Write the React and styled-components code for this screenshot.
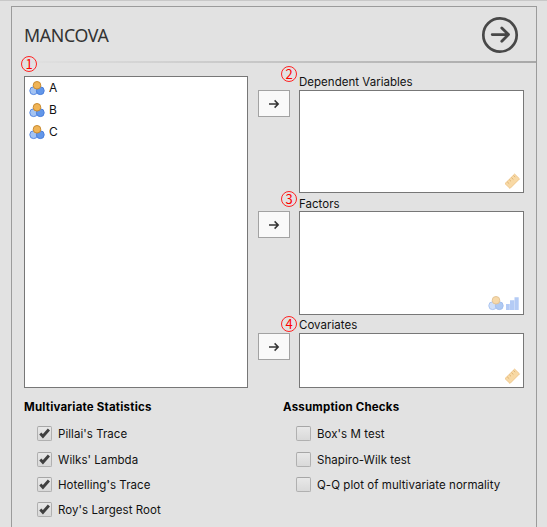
import React from "react";
import styled, { createGlobalStyle } from "styled-components";

const Global = createGlobalStyle`
  * { box-sizing: border-box; }
  html, body { margin: 0; height: 527px; overflow: hidden; background: #e2e2e2; }
`;

const Window = styled.div`
  height: 527px;
  padding: 5px 10px 0 11px;
  border-top: 1px solid #c8c8c8;
  background: #e2e2e2;
  color: #111;
  font: 11.5px/14px Inter, "Liberation Sans", sans-serif;
  overflow: hidden;
`;

const Panel = styled.section`
  height: 540px;
  border: 1px solid #9b9b9b;
`;

const Header = styled.header`
  height: 54px;
  padding: 2px 17px 0 12px;
  display: flex;
  align-items: center;
  justify-content: space-between;
`;

const Title = styled.h1`
  margin: 0;
  color: #333;
  font: 400 17.8px/26px "Noto Sans", "Open Sans", sans-serif;
  letter-spacing: -0.35px;
`;

const RunButton = styled.button`
  width: 38px;
  height: 38px;
  padding: 0;
  border: 0;
  background: none;
  svg { display: block; }
`;

const Divider = styled.div`
  height: 2px;
  background: linear-gradient(to right, #e2e2e2, #a8a8a8);
`;

const Variables = styled.div`
  display: grid;
  grid-template-columns: 224px 32px 225px;
  column-gap: 10px;
  padding: 13px 0 0 12px;
`;

const SourceColumn = styled.div`
  position: relative;
`;

const SourceList = styled.div`
  height: 312px;
  padding: 0 4px;
  border: 1px solid #777;
  background: #fff;
`;

const SourceRow = styled.div`
  height: 22px;
  display: flex;
  align-items: center;
  gap: 4px;
  font-size: 12px;
  line-height: 16px;
  svg { display: block; }
`;

const MoveColumn = styled.div`
  display: grid;
  grid-template-rows: 121px 122px 55px;
  padding-top: 14px;
`;

const MoveButton = styled.button`
  width: 32px;
  height: 27px;
  padding: 0;
  display: grid;
  place-items: center;
  border: 1px solid #a2a2a2;
  background: #f9f9f9;
`;

const Targets = styled.div`
  margin-left: -1px;
  width: 225px;
`;

const TargetLabel = styled.div`
  position: relative;
  height: ${(p) => p.$height}px;
  display: flex;
  align-items: flex-end;
  line-height: ${(p) => p.$line || 15}px;
  letter-spacing: 0.02px;
`;

const DropBox = styled.div`
  height: ${(p) => p.$height}px;
  padding: 0 ${(p) => p.$inset}px ${(p) => p.$inset}px;
  display: flex;
  align-items: flex-end;
  justify-content: flex-end;
  gap: 1px;
  border: 1px solid #777;
  background: #fff;
`;

const Marker = styled.span`
  position: absolute;
  left: ${(p) => p.$x}px;
  top: ${(p) => p.$y}px;
  width: 16px;
  height: 16px;
  display: grid;
  place-items: center;
  border: 1px solid #f22;
  border-radius: 50%;
  color: #f00;
  font: 13px/14px "Noto Sans CJK JP", "Noto Sans", sans-serif;
  letter-spacing: 0;
`;

const Options = styled.div`
  display: grid;
  grid-template-columns: 259px 1fr;
  padding: 12px 0 0 12px;
`;

const GroupTitle = styled.h2`
  margin: 0 0 11px;
  color: #000;
  font-size: 11.5px;
  line-height: 15px;
  font-weight: 700;
  letter-spacing: 0.2px;
`;

const OptionList = styled.div`
  display: grid;
  grid-template-rows: 26px 25px 25px 25px;
`;

const Option = styled.label`
  padding-left: 13px;
  display: flex;
  align-items: flex-start;
  gap: 6px;
  line-height: 17px;
  letter-spacing: 0.05px;
  white-space: nowrap;
`;

const Check = styled.span`
  width: 15px;
  height: 15px;
  border: 1px solid #b0b0b0;
  border-top-color: #a6a6a6;
  border-radius: 2px;
  background: linear-gradient(#e8e8e8, #d9d9d9);
  svg { display: block; }
`;

const Nominal = ({ faded }) => (
  <svg width="16" height="16" viewBox="0 0 16 16" opacity={faded ? 0.5 : 1}>
    <circle cx="4.7" cy="10.7" r="3.9" fill="#a4c3f2" stroke="#5b8ce4" />
    <circle cx="11.3" cy="10.7" r="3.9" fill="#6297e9" stroke="#4b7fdc" />
    <circle cx="8" cy="5.3" r="3.8" fill="#f0b456" stroke="#c98b31" />
  </svg>
);

const Ordinal = () => (
  <svg width="15" height="16" viewBox="0 0 15 16" fill="#b4cbf5">
    <path d="M1 9h3.8v6H1zM5 5.3h4.2V15H5zM9.5 2.2h4.2V15h-4.2z" />
  </svg>
);

const Scale = () => (
  <svg width="18" height="18" viewBox="0 0 18 18">
    <path d="M2 11.6 11.6 2.1 16.5 6.9 7 16.4Z" fill="#f8d9a5" stroke="#f0c88e" />
    <path d="m4.2 9.8 2 1.9M6.3 7.7l1.7 1.6M8.4 5.6l2 1.9M10.5 3.5l1.7 1.6" stroke="#dfb575" fill="none" />
  </svg>
);

const Arrow = () => (
  <svg width="12" height="12" viewBox="0 0 12 12" fill="none" stroke="#333" strokeWidth="1.5">
    <path d="M1 6h9M6.6 2.4 10.2 6 6.6 9.6" />
  </svg>
);

const statistics = ["Pillai's Trace", "Wilks' Lambda", "Hotelling's Trace", "Roy's Largest Root"];
const checks = ["Box's M test", "Shapiro-Wilk test", "Q-Q plot of multivariate normality"];

const OptionGroup = ({ title, items, checked }) => (
  <div>
    <GroupTitle>{title}</GroupTitle>
    <OptionList>
      {items.map((text) => (
        <Option key={text}>
          <Check>
            {checked && (
              <svg width="13" height="13" viewBox="0 0 13 13" fill="none" stroke="#404040" strokeWidth="2.9">
                <path d="m2.3 6.6 2.6 2.7 6-6.8" />
              </svg>
            )}
          </Check>
          {text}
        </Option>
      ))}
    </OptionList>
  </div>
);

export default function App() {
  return (
    <Window>
      <Global />
      <Panel>
        <Header>
          <Title>MANCOVA</Title>
          <RunButton aria-label="Run">
            <svg width="38" height="38" viewBox="0 0 38 38" fill="none" stroke="#484848" strokeLinecap="round" strokeLinejoin="round">
              <circle cx="19" cy="19" r="16.7" strokeWidth="2.7" />
              <path d="M11.2 18.6h16M20.8 11.9l6.7 6.7-6.7 6.7" strokeWidth="2.8" />
            </svg>
          </RunButton>
        </Header>
        <Divider />
        <Variables>
          <SourceColumn>
            <Marker $x={-3} $y={-20}>1</Marker>
            <SourceList>
              {["A", "B", "C"].map((name) => (
                <SourceRow key={name}><Nominal />{name}</SourceRow>
              ))}
            </SourceList>
          </SourceColumn>
          <MoveColumn>
            {["Dependent", "Factors", "Covariates"].map((name) => (
              <MoveButton key={name} aria-label={name}><Arrow /></MoveButton>
            ))}
          </MoveColumn>
          <Targets>
            <TargetLabel $height={14}>
              <Marker $x={-18} $y={-10}>2</Marker>Dependent Variables
            </TargetLabel>
            <DropBox $height={103} $inset={2}><Scale /></DropBox>
            <TargetLabel $height={18} $line={13}>
              <Marker $x={-18} $y={-2}>3</Marker>Factors
            </TargetLabel>
            <DropBox $height={104} $inset={3}><Nominal faded /><Ordinal /></DropBox>
            <TargetLabel $height={18}>
              <Marker $x={-18} $y={1}>4</Marker>Covariates
            </TargetLabel>
            <DropBox $height={55} $inset={2}><Scale /></DropBox>
          </Targets>
        </Variables>
        <Options>
          <OptionGroup title="Multivariate Statistics" items={statistics} checked />
          <OptionGroup title="Assumption Checks" items={checks} />
        </Options>
      </Panel>
    </Window>
  );
}
